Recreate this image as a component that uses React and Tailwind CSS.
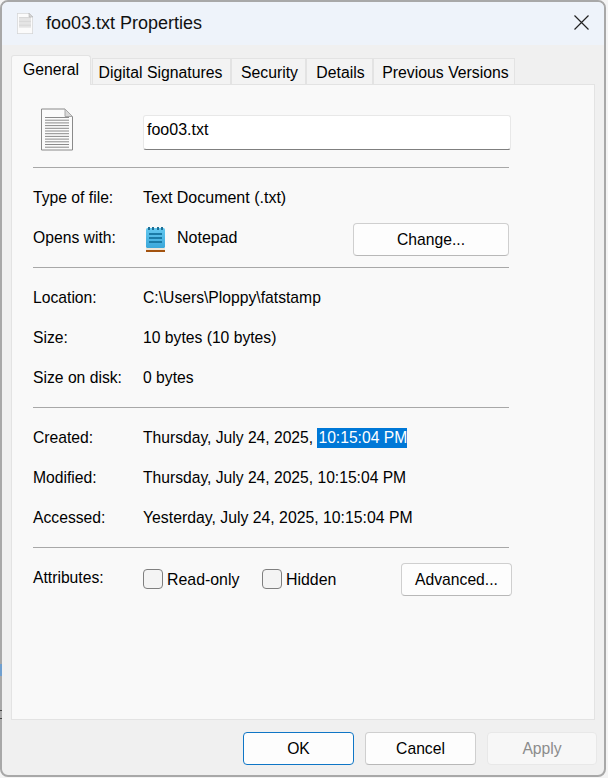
function DocIcon({ className, lines = 12, stroke = "#8a8a8a" }) {
  const rows = [];
  for (let i = 0; i < lines; i++) {
    rows.push(<path key={i} d={`M4 ${9 + i * 2.7}H28`} stroke={stroke} strokeWidth="1" />);
  }
  return (
    <svg className={className} viewBox="0 0 32 42" fill="none">
      <path d="M0.5 0.5H24L31.5 8V41.5H0.5Z" fill="#fbfbfb" stroke={stroke} />
      <path d="M24 0.5V8H31.5Z" fill="#d8d8d8" stroke="#a8a8a8" />
      {rows}
    </svg>
  );
}

function NotepadIcon() {
  return (
    <svg className="mt-[3px] ml-[3px] h-[25px] w-[19px]" viewBox="0 0 19 25" fill="none">
      <defs>
        <linearGradient id="pad" x1="0" y1="0" x2="0" y2="1">
          <stop offset="0" stopColor="#63c8ef" />
          <stop offset="1" stopColor="#3ca8da" />
        </linearGradient>
      </defs>
      <rect x="0" y="1" width="19" height="20" rx="1.5" fill="url(#pad)" />
      <rect x="0" y="21" width="19" height="2" fill="#efe6d8" />
      <rect x="0" y="23" width="19" height="2" fill="#a3530f" />
      <rect x="2" y="0" width="2" height="3" fill="#1d6f96" />
      <rect x="6" y="0" width="2" height="3" fill="#1d6f96" />
      <rect x="11" y="0" width="2" height="3" fill="#1d6f96" />
      <rect x="15" y="0" width="2" height="3" fill="#1d6f96" />
      <rect x="3" y="6" width="13" height="2" fill="#1b7ba6" />
      <rect x="3" y="10" width="13" height="2" fill="#1b7ba6" />
      <rect x="3" y="14" width="13" height="2" fill="#1b7ba6" />
    </svg>
  );
}

function Tab({ label, active, className }) {
  return (
    <div
      className={
        active
          ? "z-10 -mb-px flex h-[30px] w-[80px] items-center justify-center self-end rounded-t-[3px] border border-b-0 border-[#e3e3e3] bg-[#f9f9f9] pb-0.5"
          : `flex h-[26px] items-center justify-center self-end border border-b-0 border-[#e3e3e3] bg-[#f3f3f3] pt-0.5 ${className}`
      }
    >
      {label}
    </div>
  );
}

function Row({ label, children }) {
  return (
    <div className="flex h-10 w-[476px] items-center">
      <div className="w-[110px] shrink-0">{label}</div>
      {children}
    </div>
  );
}

function Sep() {
  return <div className="h-px w-[476px] bg-[#a8a8a8]" />;
}

function Btn({ children, className }) {
  return (
    <button className={`flex shrink-0 items-center justify-center rounded-[4px] border border-[#cfcfcf] border-b-[#b8b8b8] bg-[#fdfdfd] ${className}`}>
      {children}
    </button>
  );
}

function Check({ label, className }) {
  return (
    <div className={`mt-[3px] flex shrink-0 items-center gap-1 text-[15.9px] ${className}`}>
      <div className="h-5 w-5 rounded-[4px] border border-[#7f7f7f] bg-[#f4f4f4]" />
      <span>{label}</span>
    </div>
  );
}

export default function App() {
  return (
    <div className="relative h-[778px] w-[608px] overflow-hidden bg-[#f4f4f4] font-['Liberation_Sans',Arial,sans-serif] text-[15.7px] text-black">
      <div className="flex h-[777px] w-[606px] flex-col overflow-hidden rounded-[8px] border-2 border-[#a8a8a8] bg-[#f0f0f0]">
        {/* title bar */}
        <div className="flex h-[43px] shrink-0 items-center bg-[#eef3fa] pl-[15px]">
          <DocIcon className="h-[21px] w-4" lines={8} stroke="#b4b4b4" />
          <span className="ml-[13px] text-[18px] text-[#111]">foo03.txt Properties</span>
          <svg className="mr-[15px] mb-[2px] ml-auto h-[15px] w-[15px]" viewBox="0 0 15 15" fill="none" stroke="#222" strokeWidth="1.2">
            <path d="M0.5 0.5L14.5 14.5M14.5 0.5L0.5 14.5" />
          </svg>
        </div>

        {/* tabs */}
        <div className="mt-[10px] flex h-[29px] shrink-0 items-end pl-[9px] text-[15.8px]">
          <Tab label="General" active />
          <Tab label="Digital Signatures" className="ml-px w-[139px] pr-[2px]" />
          <Tab label="Security" className="w-[75px] pl-[2px]" />
          <Tab label="Details" className="w-[67px] pl-[2px]" />
          <Tab label="Previous Versions" className="w-[142px] pl-[3px]" />
        </div>

        {/* panel */}
        <div className="mx-[9px] flex h-[636px] w-[584px] shrink-0 flex-col border border-[#e3e3e3] bg-[#f9f9f9] pl-[21px]">
          <div className="flex h-[82px] shrink-0">
            <DocIcon className="mt-[23px] ml-[8px] h-[43px] w-8" />
            <div className="mt-[30px] ml-[70px] h-[35px] w-[368px] rounded-[3px] border border-[#e8e8e8] border-b-[#7f7f7f] bg-white pt-[2px] pl-[3px] text-base">
              foo03.txt
            </div>
          </div>
          <Sep />
          <div className="mt-[10px] mb-[9px]">
            <Row label="Type of file:"><span className="text-base">Text Document (.txt)</span></Row>
            <Row label="Opens with:">
              <NotepadIcon />
              <span className="ml-[12px] text-base">Notepad</span>
              <Btn className="mt-[3px] ml-auto h-[33px] w-[156px]">Change...</Btn>
            </Row>
          </div>
          <Sep />
          <div className="mt-[10px] mb-[9px]">
            <Row label="Location:">C:\Users\Ploppy\fatstamp</Row>
            <Row label="Size:">10 bytes (10 bytes)</Row>
            <Row label="Size on disk:">0 bytes</Row>
          </div>
          <Sep />
          <div className="mt-[10px] mb-[9px]">
            <Row label="Created:">
              <span className="text-[15.65px]">Thursday, July 24, 2025,&nbsp;</span>
              <span className="-mt-px bg-[#0078d7] pl-px text-[15.65px] leading-5 text-white">10:15:04 PM</span>
            </Row>
            <Row label="Modified:"><span className="text-[15.65px]">Thursday, July 24, 2025, 10:15:04 PM</span></Row>
            <Row label="Accessed:"><span className="text-[15.8px]">Yesterday, July 24, 2025, 10:15:04 PM</span></Row>
          </div>
          <Sep />
          <div className="mt-[10px]">
            <Row label="Attributes:">
              <Check label="Read-only" className="w-[119px]" />
              <Check label="Hidden" className="w-[139px]" />
              <Btn className="mt-[3px] h-[33px] w-[111px]">Advanced...</Btn>
            </Row>
          </div>
        </div>

        {/* footer */}
        <div className="mt-[12px] flex gap-[11px] pl-[241px]">
          <button className="flex h-[33px] w-[111px] items-center justify-center rounded-[4px] border border-[#0f76c6] bg-[#fdfdfd]">OK</button>
          <Btn className="h-[33px] w-[111px]">Cancel</Btn>
          <button className="flex h-[33px] w-[110px] items-center justify-center rounded-[4px] border border-[#e8e8e8] bg-[#f7f7f7] text-[#8c8c8c]">Apply</button>
        </div>
      </div>

      {/* bits of the window behind, showing through at the left edge */}
      <div className="absolute top-[664px] left-0 h-3 w-0.5 bg-[#6f9fcf]" />
      <div className="absolute top-[710px] left-0 h-px w-0.5 bg-[#444]" />
      <div className="absolute top-[718px] left-0 h-px w-0.5 bg-[#444]" />
    </div>
  );
}
